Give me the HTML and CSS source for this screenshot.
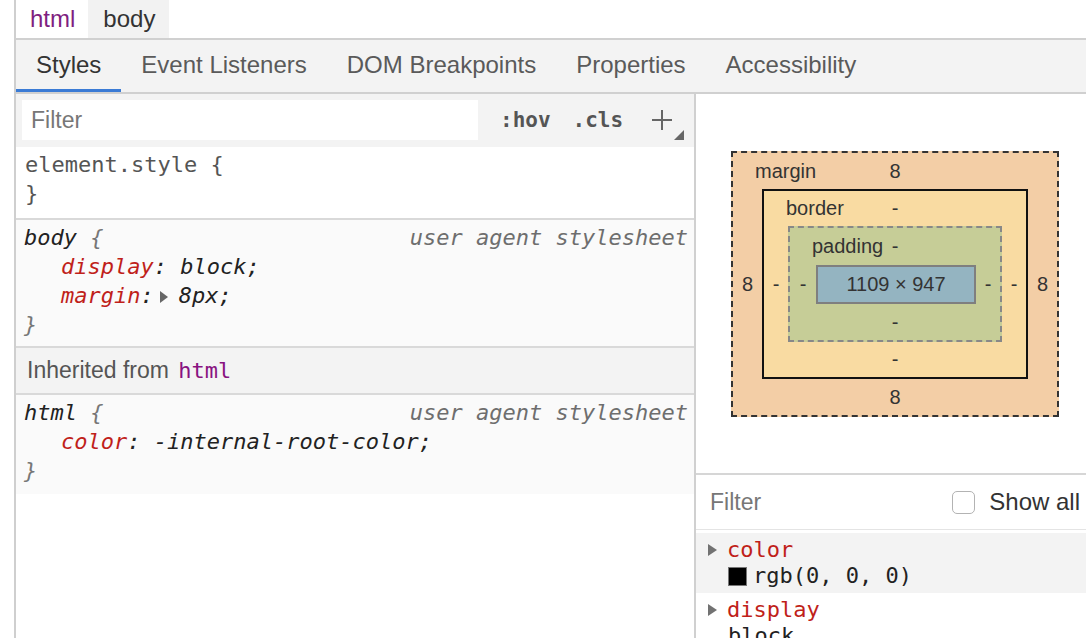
FILE: index.html
```html
<!DOCTYPE html>
<html>
<head>
<meta charset="utf-8">
<title>DevTools Styles</title>
<link rel="stylesheet" href="styles.css">
</head>
<body>
<div class="devtools">
  <div class="crumbs">
    <span class="crumb crumb-html">html</span>
    <span class="crumb crumb-body">body</span>
  </div>
  <div class="tabs">
    <div class="tab active">Styles</div>
    <div class="tab">Event Listeners</div>
    <div class="tab">DOM Breakpoints</div>
    <div class="tab">Properties</div>
    <div class="tab">Accessibility</div>
  </div>
  <div class="main">
    <div class="styles-pane">
      <div class="toolbar">
        <div class="filter">Filter</div>
        <div class="tool tool-hov">:hov</div>
        <div class="tool tool-cls">.cls</div>
        <svg class="plus" width="34" height="30" viewBox="0 0 34 30">
          <path d="M2 10H22M12 0V20" stroke="#666" stroke-width="2" fill="none"/>
          <path d="M34 20V30H24Z" fill="#666"/>
        </svg>
      </div>
      <div class="rule rule-element">
        <div class="line el">element.style {</div>
        <div class="line el">}</div>
      </div>
      <div class="rule rule-ua">
        <div class="line head"><span><span class="sel">body</span> <span class="brace">{</span></span><span class="origin">user agent stylesheet</span></div>
        <div class="line prop"><span class="pname">display</span>: <span class="pval">block</span>;</div>
        <div class="line prop"><span class="pname">margin</span>:<span class="expand"></span><span class="pval">8px</span>;</div>
        <div class="line brace">}</div>
      </div>
      <div class="inherited">Inherited from <span class="inh-node">html</span></div>
      <div class="rule rule-ua rule-last">
        <div class="line head"><span><span class="sel">html</span> <span class="brace">{</span></span><span class="origin">user agent stylesheet</span></div>
        <div class="line prop"><span class="pname">color</span>: <span class="pval">-internal-root-color</span>;</div>
        <div class="line brace">}</div>
      </div>
    </div>
    <div class="side-pane">
      <div class="boxmodel-area">
        <div class="bm bm-margin">
          <div class="bm-top"><span class="bm-label">margin</span><span class="bm-val">8</span><span></span></div>
          <div class="bm-left">8</div>
          <div class="bm bm-border">
            <div class="bm-top"><span class="bm-label">border</span><span class="bm-val">-</span><span></span></div>
            <div class="bm-left">-</div>
            <div class="bm bm-padding">
              <div class="bm-top"><span class="bm-label">padding</span><span class="bm-val">-</span><span></span></div>
              <div class="bm-left">-</div>
              <div class="bm-content">1109 × 947</div>
              <div class="bm-right">-</div>
              <div class="bm-bottom">-</div>
            </div>
            <div class="bm-right">-</div>
            <div class="bm-bottom">-</div>
          </div>
          <div class="bm-right">8</div>
          <div class="bm-bottom">8</div>
        </div>
      </div>
      <div class="computed-filter">
        <span class="cf-text">Filter</span>
        <span class="cf-showall"><span class="checkbox"></span>Show all</span>
      </div>
      <div class="computed-list">
        <div class="cprop cprop-alt">
          <div class="cname"><span class="ctri"></span>color</div>
          <div class="cvalue"><span class="swatch"></span>rgb(0, 0, 0)</div>
        </div>
        <div class="cprop">
          <div class="cname"><span class="ctri"></span>display</div>
          <div class="cvalue">block</div>
        </div>
      </div>
    </div>
  </div>
</div>
</body>
</html>
```
FILE: styles.css
```css
html, body {
  margin: 0;
  padding: 0;
  background: #ffffff;
}

body {
  font-family: "Liberation Sans", Arial, sans-serif;
  color: #333;
  overflow: hidden;
}

.devtools {
  margin-left: 14px;
  border-left: 2px solid #cfcfcf;
  height: 638px;
  display: flex;
  flex-direction: column;
  overflow: hidden;
}

/* breadcrumbs */
.crumbs {
  flex-shrink: 0;
  display: flex;
  height: 38px;
  border-bottom: 2px solid #d0d0d0;
  font-size: 24px;
  line-height: 38px;
}

.crumb {
  display: block;
}

.crumb-html {
  padding: 0 13px 0 14px;
  color: #7f1f80;
}

.crumb-body {
  padding: 0 14px 0 15px;
  background: #f2f2f2;
  color: #333;
}

/* tabs */
.tabs {
  flex-shrink: 0;
  display: flex;
  height: 52px;
  background: #f3f3f3;
  border-bottom: 2px solid #d0d0d0;
}

.tab {
  padding: 0 20px;
  line-height: 50px;
  font-size: 24px;
  color: #5a5a5a;
}

.tab.active {
  color: #333;
  box-shadow: inset 0 -3px 0 #3a7bd5;
}

/* main */
.main {
  flex: 1;
  display: flex;
  min-height: 0;
}

.styles-pane {
  flex-shrink: 0;
  width: 678px;
  border-right: 2px solid #d0d0d0;
  display: flex;
  flex-direction: column;
}

.toolbar {
  flex-shrink: 0;
  height: 53px;
  box-sizing: border-box;
  padding-top: 6px;
  background: #f3f3f3;
  display: flex;
  align-items: flex-start;
}

.filter {
  margin-left: 6px;
  width: 456px;
  height: 40px;
  box-sizing: border-box;
  padding-left: 9px;
  background: #ffffff;
  color: #777;
  font-size: 23px;
  line-height: 40px;
}

.tool {
  font-family: "DejaVu Sans Mono", monospace;
  font-weight: bold;
  font-size: 21px;
  line-height: 40px;
  color: #555;
}

.tool-hov {
  margin-left: 22px;
}

.tool-cls {
  margin-left: 22px;
}

.plus {
  margin-left: 27px;
  margin-top: 10px;
}

/* rules */
.rule {
  flex-shrink: 0;
  font-family: "DejaVu Sans Mono", monospace;
  font-size: 22px;
  line-height: 29px;
  padding-left: 8px;
  padding-right: 6px;
}

.rule-element {
  background: #ffffff;
  padding-top: 3px;
  padding-bottom: 10px;
  border-bottom: 2px solid #d9d9d9;
}

.rule-element .line {
  color: #555;
  padding-left: 1px;
}

.rule-ua {
  background: #fafafa;
  padding-top: 3px;
  padding-bottom: 7px;
  border-bottom: 2px solid #d9d9d9;
  font-style: italic;
  color: #222;
}

.rule-last {
  padding-bottom: 9px;
  border-bottom: none;
}

.line.head {
  display: flex;
  justify-content: space-between;
}

.sel {
  color: #222;
}

.brace {
  color: #777;
}

.origin {
  color: #6e6e6e;
}

.line.prop {
  padding-left: 37px;
  color: #222;
}

.pname {
  color: #c01f1a;
}

.pval {
  color: #222;
}

.expand {
  display: inline-block;
  width: 0;
  height: 0;
  border-top: 6px solid transparent;
  border-bottom: 6px solid transparent;
  border-left: 8px solid #666;
  margin: 0 11px 0 6px;
  vertical-align: 0;
}

.inherited {
  flex-shrink: 0;
  height: 45px;
  line-height: 45px;
  background: #f3f3f3;
  border-bottom: 2px solid #d9d9d9;
  padding-left: 11px;
  font-size: 23px;
  color: #555;
}

.inh-node {
  font-family: "DejaVu Sans Mono", monospace;
  font-size: 22px;
  color: #881280;
  margin-left: 3px;
}

/* side pane */
.side-pane {
  flex: 1;
  display: flex;
  flex-direction: column;
  min-width: 0;
  overflow: hidden;
}

.boxmodel-area {
  flex-shrink: 0;
  height: 381px;
  box-sizing: border-box;
  padding: 57px 0 0 35px;
  border-bottom: 2px solid #d6d6d6;
}

.bm {
  display: grid;
  box-sizing: border-box;
  font-size: 20px;
  color: #333;
  grid-template-areas:
    "top top top"
    "left mid right"
    "bottom bottom bottom";
}

.bm-margin {
  width: 328px;
  height: 266px;
  border: 2px dashed #333;
  background: #f3cea6;
  grid-template-columns: 29px 266px 29px;
  grid-template-rows: 36px 190px 36px;
}

.bm-border {
  grid-area: mid;
  width: 266px;
  height: 190px;
  border: 2px solid #111;
  background: #f9dba2;
  grid-template-columns: 24px 214px 24px;
  grid-template-rows: 35px 116px 35px;
}

.bm-padding {
  grid-area: mid;
  width: 214px;
  height: 116px;
  border: 2px dashed #888;
  background: #c6cd97;
  grid-template-columns: 26px 160px 24px;
  grid-template-rows: 37px 39px 36px;
}

.bm-content {
  grid-area: mid;
  box-sizing: border-box;
  width: 160px;
  height: 39px;
  border: 2px solid #7f7f7f;
  background: #94b4c1;
  text-align: center;
  line-height: 35px;
}

.bm-top {
  grid-area: top;
  display: grid;
  grid-template-columns: minmax(0, 1fr) auto minmax(0, 1fr);
  align-items: center;
}

.bm-label {
  padding-left: 22px;
  white-space: nowrap;
}

.bm-left,
.bm-right {
  display: flex;
  align-items: center;
  justify-content: center;
}

.bm-left {
  grid-area: left;
}

.bm-right {
  grid-area: right;
}

.bm-bottom {
  grid-area: bottom;
  display: flex;
  align-items: center;
  justify-content: center;
}

/* computed */
.computed-filter {
  flex-shrink: 0;
  height: 55px;
  box-sizing: border-box;
  border-bottom: 1px solid #e4e4e4;
  display: flex;
  align-items: center;
  justify-content: space-between;
  padding: 0 6px 0 14px;
  font-size: 23px;
}

.cf-text {
  color: #777;
}

.cf-showall {
  display: flex;
  align-items: center;
  color: #333;
  font-size: 24px;
}

.checkbox {
  display: inline-block;
  width: 23px;
  height: 23px;
  box-sizing: border-box;
  border: 1.5px solid #b3b3b3;
  border-radius: 5px;
  background: #fff;
  margin-right: 14px;
}

.computed-list {
  flex-shrink: 0;
  padding-top: 3px;
  font-family: "DejaVu Sans Mono", monospace;
  font-size: 22px;
  line-height: 26px;
}

.cprop {
  padding: 4px 0 4px 12px;
}

.cprop-alt {
  background: #f3f3f3;
}

.cname {
  color: #c01f1a;
  display: flex;
  align-items: center;
}

.ctri {
  display: inline-block;
  width: 0;
  height: 0;
  border-top: 6px solid transparent;
  border-bottom: 6px solid transparent;
  border-left: 9px solid #727272;
  margin-right: 10px;
}

.cvalue {
  padding-left: 20px;
  color: #222;
  display: flex;
  align-items: center;
}

.swatch {
  display: inline-block;
  width: 19px;
  height: 19px;
  box-sizing: border-box;
  background: #000;
  border: 1.5px solid #777;
  margin-right: 6px;
}
```
